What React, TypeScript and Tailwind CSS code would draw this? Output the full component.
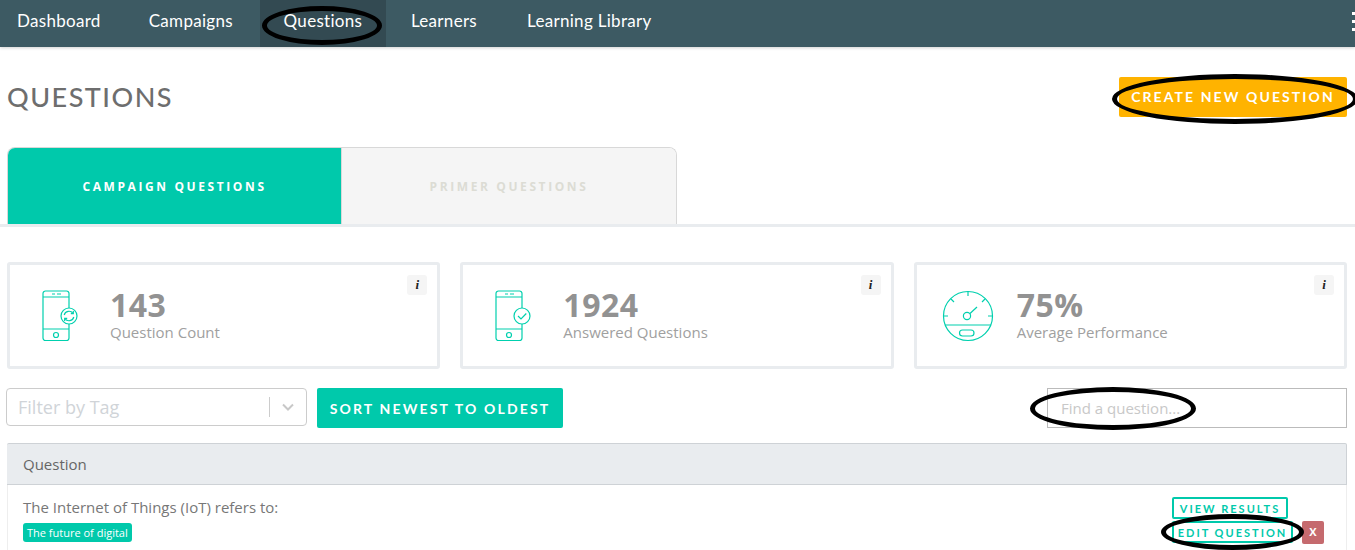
import { ReactNode } from 'react'

const navItems = [
  { label: 'Dashboard', className: 'pr-[23px] pl-[17px]' },
  { label: 'Campaigns', className: 'pr-[27px] pl-[25px]' },
  { label: 'Questions', className: 'w-[126px] justify-center bg-[#334a52]' },
  { label: 'Learners', className: 'px-[25px]' },
  { label: 'Learning Library', className: 'px-[25px]' },
]

function PhoneIcon({ badge }: { badge: 'sync' | 'check' }) {
  return (
    <svg width="38" height="52" viewBox="0 0 38 52" fill="none" stroke="#00d0ae" strokeWidth="1.2">
      <path d="M27 18V3.500A2.500 2.500 0 0 0 24.500 1H3.500A2.500 2.500 0 0 0 1 3.500V48A2.500 2.500 0 0 0 3.500 50.500H24.500A2.500 2.500 0 0 0 27 48V34" />
      <path d="M1 7H27M1 39H27" />
      <path d="M10 4H13M15 4H19" />
      <circle cx="14" cy="45" r="2.500" />
      <circle cx="27" cy="26" r="8" fill="#fff" />
      {badge === 'sync' ? (
        <>
          <path d="M22.200 25A4.900 4.900 0 0 1 31 23.400M31.800 27A4.900 4.900 0 0 1 23 28.600" />
          <path d="M31.300 21V23.700H28.800M22.700 31V28.300H25.200" />
        </>
      ) : (
        <path d="M23 26L26 29L31.300 23.500" />
      )}
    </svg>
  )
}

function GaugeIcon() {
  return (
    <svg width="52" height="52" viewBox="0 0 52 52" fill="none" stroke="#00d0ae" strokeWidth="1.2">
      <circle cx="26" cy="26" r="24.500" />
      <path d="M26 1.500V6M9 9L12 12M43 9L40 12M1.500 26H6M46 26H50.500" />
      <circle cx="25" cy="26" r="3.600" />
      <path d="M28 23.500L35 17" />
      <path d="M3 35H49" />
      <rect x="17.500" y="40" width="14.500" height="6" rx="3" />
    </svg>
  )
}

function StatCard({ icon, value, label, iconWidth }: { icon: ReactNode; value: string; label: string; iconWidth: string }) {
  return (
    <div className="relative flex h-[107px] flex-1 items-center rounded-[3px] border-[3px] border-[#e9ecef] bg-white">
      <div className={iconWidth}>{icon}</div>
      <div className="flex flex-col pb-[1px]">
        <span className="text-[32px] leading-[33px] font-bold tracking-[0.5px] text-[#929292]">{value}</span>
        <span className="text-[15px] leading-[22px] text-[#a0a0a0]">{label}</span>
      </div>
      <span className="absolute top-[10px] right-[10px] flex h-5 w-5 items-center justify-center rounded-[3px] bg-[#f5f5f5] font-['Liberation_Serif',serif] text-[13px] font-bold text-[#222] italic">
        i
      </span>
    </div>
  )
}

function Ring({ className }: { className: string }) {
  return <span className={`pointer-events-none absolute rounded-[50%] border-[5px] border-black ${className}`} />
}

export default function App() {
  return (
    <div className="relative h-[550px] w-[1355px] overflow-hidden bg-white font-['Open_Sans',sans-serif]">
      {/* Nav */}
      <nav className="flex h-[47px] items-stretch justify-between bg-[#3d5a63] shadow-[0_1px_3px_rgba(0,0,0,0.18)]">
        <div className="flex font-['Lato',sans-serif] text-[17px] tracking-[0.3px] text-white">
          {navItems.map((item) => (
            <a key={item.label} className={`flex items-start pt-[10px] leading-[22px] ${item.className}`}>
              {item.label}
            </a>
          ))}
        </div>
        <div className="flex flex-col gap-[5px] pt-[12px]">
          {[0, 1, 2].map((i) => (
            <span key={i} className="h-[3px] w-[3px] bg-white" />
          ))}
        </div>
      </nav>

      {/* Title */}
      <div className="flex items-center justify-between pt-[29px] pr-[8px] pl-[7px]">
        <h1 className="font-['Lato',sans-serif] text-[27px] leading-[42px] font-medium tracking-[1.5px] text-[#6e6e6e]">QUESTIONS</h1>
        <button className="flex h-[40px] w-[228px] items-center justify-center rounded-[2px] bg-[#ffb300] pb-[1px] font-['Lato',sans-serif] text-[14px] font-bold tracking-[2.1px] text-white">
          CREATE NEW QUESTION
        </button>
      </div>

      {/* Tabs */}
      <div className="mt-[29px] border-b-[3px] border-[#e9ecef] pl-[7px]">
        <div className="flex h-[77px] w-[670px] overflow-hidden rounded-t-[8px] border border-b-0 border-[#d8d8d8] text-[12px] font-bold tracking-[2.6px]">
          <div className="flex w-[333px] items-center justify-center bg-[#00c9ab] pt-[2px] text-white">CAMPAIGN QUESTIONS</div>
          <div className="flex flex-1 items-center justify-center border-l border-[#d8d8d8] bg-[#f5f5f5] pt-[2px] text-[#dcdcd4]">PRIMER QUESTIONS</div>
        </div>
      </div>

      {/* Stats */}
      <div className="mt-[35px] flex gap-[20px] pr-[8px] pl-[7px]">
        <StatCard icon={<PhoneIcon badge="sync" />} value="143" label="Question Count" iconWidth="w-[100px] pl-[32px]" />
        <StatCard icon={<PhoneIcon badge="check" />} value="1924" label="Answered Questions" iconWidth="w-[100px] pl-[32px]" />
        <StatCard icon={<GaugeIcon />} value="75%" label="Average Performance" iconWidth="w-[100px] pl-[25px]" />
      </div>

      {/* Filters */}
      <div className="mt-[19px] flex items-start pr-[8px] pl-[6px]">
        <div className="flex h-[38px] w-[301px] items-center rounded-[4px] border border-[#ccc] bg-white pl-[11px]">
          <span className="flex-1 text-[18px] text-[#d0d4d8]">Filter by Tag</span>
          <span className="h-[20px] w-px bg-[#ccc]" />
          <svg className="mx-[11px]" width="14" height="14" viewBox="0 0 14 14" fill="none" stroke="#c8c8c8" strokeWidth="2">
            <path d="M2 4.500L7 9.500L12 4.500" />
          </svg>
        </div>
        <button className="ml-[10px] flex h-[40px] w-[246px] items-center justify-center rounded-[2px] bg-[#00c9ab] font-['Lato',sans-serif] text-[14px] font-bold tracking-[2.15px] text-white">
          SORT NEWEST TO OLDEST
        </button>
        <div className="ml-auto flex h-[40px] w-[300px] items-center border border-[#bbb] pl-[13px] text-[15px] text-[#c8c8c8]">
          Find a question...
        </div>
      </div>

      {/* Table */}
      <div className="mt-[15px] mr-[8px] ml-[7px]">
        <div className="flex h-[42px] items-center rounded-t-[2px] border-y border-r border-[#ced2d6] bg-[#e9ecef] pl-[16px] text-[15px] text-[#666]">
          Question
        </div>
        <div className="flex h-[70px] justify-between border-x border-[#eee] pr-[22px] pl-[15px]">
          <div className="flex flex-col items-start pt-[11px]">
            <span className="text-[15px] leading-[22px] text-[#777]">The Internet of Things (IoT) refers to:</span>
            <span className="mt-[5px] rounded-[3px] bg-[#00c9ab] px-[4px] text-[11px] leading-[19px] text-white">The future of digital</span>
          </div>
          <div className="flex items-start">
            <div className="flex flex-col items-start pt-[12px] font-['Lato',sans-serif] text-[11px] font-bold tracking-[2px] text-[#00c9ab]">
              <span className="flex h-[22px] w-[116px] items-center justify-center rounded-[2px] border-2 border-[#00c9ab] leading-none">VIEW RESULTS</span>
              <span className="mt-[2px] flex h-[22px] w-[121px] items-center justify-center rounded-[2px] border-2 border-[#00c9ab] leading-none">EDIT QUESTION</span>
            </div>
            <span className="mt-[36px] ml-[9px] flex h-[23px] w-[22px] items-center justify-center rounded-[2px] bg-[#c56a6e] text-[11px] font-bold text-white">X</span>
          </div>
        </div>
      </div>

      {/* Hand-drawn annotation rings */}
      <Ring className="top-[6px] left-[262px] h-[39px] w-[120px]" />
      <Ring className="top-[74px] left-[1112px] h-[50px] w-[246px]" />
      <Ring className="top-[387px] left-[1030px] h-[43px] w-[166px]" />
      <Ring className="top-[514px] left-[1161px] h-[36px] w-[143px]" />
    </div>
  )
}
